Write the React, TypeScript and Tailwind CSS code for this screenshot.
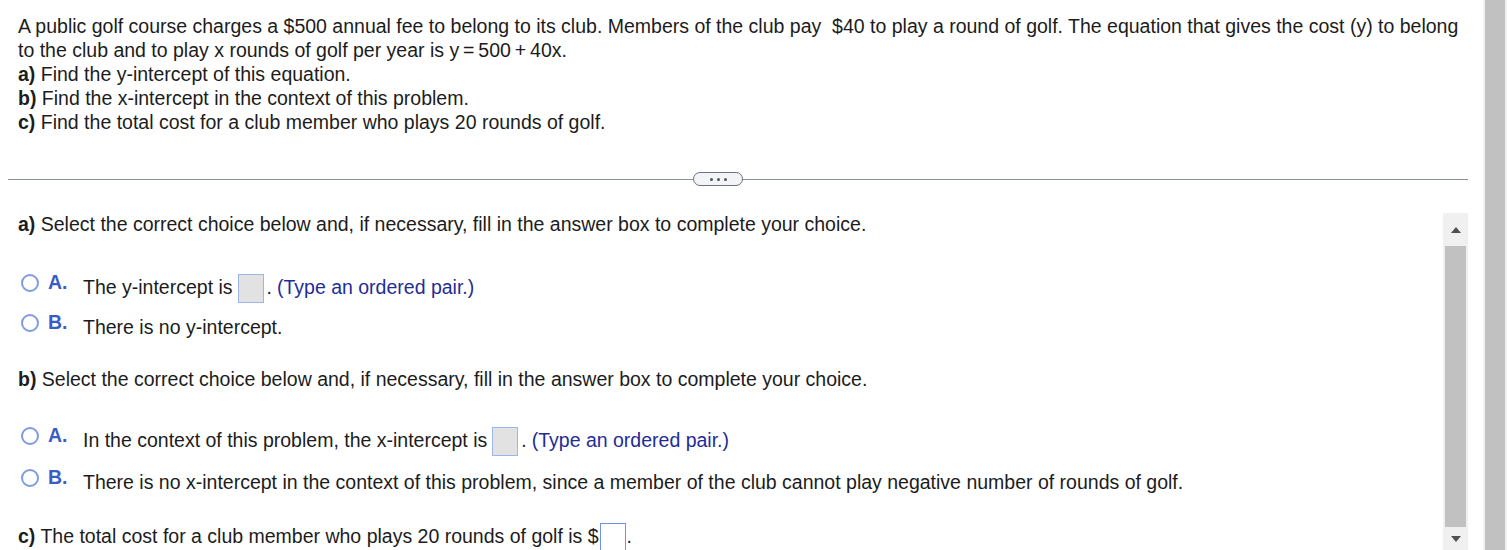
import React from "react";

function Radio({ letter }: { letter: string }) {
  return (
    <div className="flex items-center shrink-0 mb-[10px] ml-[3px]">
      <span className="w-[18px] h-[18px] rounded-full border-2 border-[#7f9be3] bg-white" />
      <span className="ml-[9px] w-[35px] font-bold text-[#3a5cc7]">{letter}</span>
    </div>
  );
}

function AnswerBox() {
  return (
    <span className="inline-block w-[26px] h-[29px] bg-[#e2e2e2] border border-[#9db6ea] ml-[5px] mr-[3px]" />
  );
}

function Option({
  letter,
  children,
  className,
}: {
  letter: string;
  children: React.ReactNode;
  className: string;
}) {
  return (
    <div className={`flex items-center h-[26px] ${className}`}>
      <Radio letter={letter} />
      <div className="flex items-center whitespace-nowrap">{children}</div>
    </div>
  );
}

function InnerScrollbar() {
  return (
    <div className="w-[25px] shrink-0 bg-[#f0f0f0] flex flex-col items-center">
      <div className="h-[33px] flex items-center justify-center">
        <span className="w-0 h-0 border-l-[5px] border-r-[5px] border-b-[6px] border-l-transparent border-r-transparent border-b-[#505050]" />
      </div>
      <div className="w-[21px] h-[281px] bg-[#c1c1c1]" />
      <div className="flex-1 flex items-center justify-center">
        <span className="w-0 h-0 border-l-[5px] border-r-[5px] border-t-[6px] border-l-transparent border-r-transparent border-t-[#505050]" />
      </div>
    </div>
  );
}

export default function App() {
  return (
    <div
      className="flex h-[550px] overflow-hidden bg-white text-[19.5px] text-[#1c1c1c]"
      style={{ fontFamily: '"Liberation Sans", Arial, sans-serif' }}
    >
      <div className="flex-1 min-w-0 flex flex-col pr-[15px]">
        <div className="pl-[18px] pt-[14px] leading-[24px]">
          <p>
            A public golf course charges a $500 annual fee to belong to its club. Members of the club pay&nbsp; $40 to
            play a round of golf. The equation that gives the cost (y) to belong to the club and to play x rounds of
            golf per year is y&#8201;=&#8201;500&#8201;+&#8201;40x.
          </p>
          <p>
            <b>a)</b> Find the y-intercept of this equation.
          </p>
          <p>
            <b>b)</b> Find the x-intercept in the context of this problem.
          </p>
          <p>
            <b>c)</b> Find the total cost for a club member who plays 20 rounds of golf.
          </p>
        </div>

        <div className="ml-[8px] mt-[38px] flex items-center h-[14px]">
          <div className="w-[685px] h-px bg-[#8b929b]" />
          <button className="w-[50px] h-[14px] rounded-full border border-[#6b7280] bg-[#f3f4f6] flex items-center justify-center gap-[4px]">
            <span className="w-[3px] h-[3px] rounded-full bg-[#4b5563]" />
            <span className="w-[3px] h-[3px] rounded-full bg-[#4b5563]" />
            <span className="w-[3px] h-[3px] rounded-full bg-[#4b5563]" />
          </button>
          <div className="flex-1 h-px bg-[#8b929b]" />
        </div>

        <div className="flex flex-1 min-h-0 mt-[27px] ml-[8px]">
          <div className="flex-1 min-w-0 pl-[10px]">
            <p className="leading-[22px]">
              <b>a)</b> Select the correct choice below and, if necessary, fill in the answer box to complete your
              choice.
            </p>
            <Option letter="A." className="mt-[40px]">
              <span>The y-intercept is</span>
              <AnswerBox />
              <span>.</span>
              <span className="ml-[5px] text-[#1f2d96]">(Type an ordered pair.)</span>
            </Option>
            <Option letter="B." className="mt-[14px]">
              <span>There is no y-intercept.</span>
            </Option>

            <p className="leading-[22px] mt-[27px]">
              <b>b)</b> Select the correct choice below and, if necessary, fill in the answer box to complete your
              choice.
            </p>
            <Option letter="A." className="mt-[38px]">
              <span>In the context of this problem, the x-intercept is</span>
              <AnswerBox />
              <span>.</span>
              <span className="ml-[5px] text-[#1f2d96]">(Type an ordered pair.)</span>
            </Option>
            <Option letter="B." className="mt-[16px]">
              <span>
                There is no x-intercept in the context of this problem, since a member of the club cannot play negative
                number of rounds of golf.
              </span>
            </Option>

            <div className="mt-[27px] flex items-center h-[28px] whitespace-nowrap">
              <span>
                <b>c)</b> The total cost for a club member who plays 20 rounds of golf is $
              </span>
              <span className="inline-block w-[26px] h-[29px] bg-white border border-[#6f93e3] mx-[1px]" />
              <span>.</span>
            </div>
          </div>
          <InnerScrollbar />
        </div>
      </div>

      <div className="w-[24px] shrink-0 bg-[#f1f1f1] flex justify-center">
        <div className="w-[20px] h-full bg-[#c1c1c1]" />
      </div>
    </div>
  );
}
